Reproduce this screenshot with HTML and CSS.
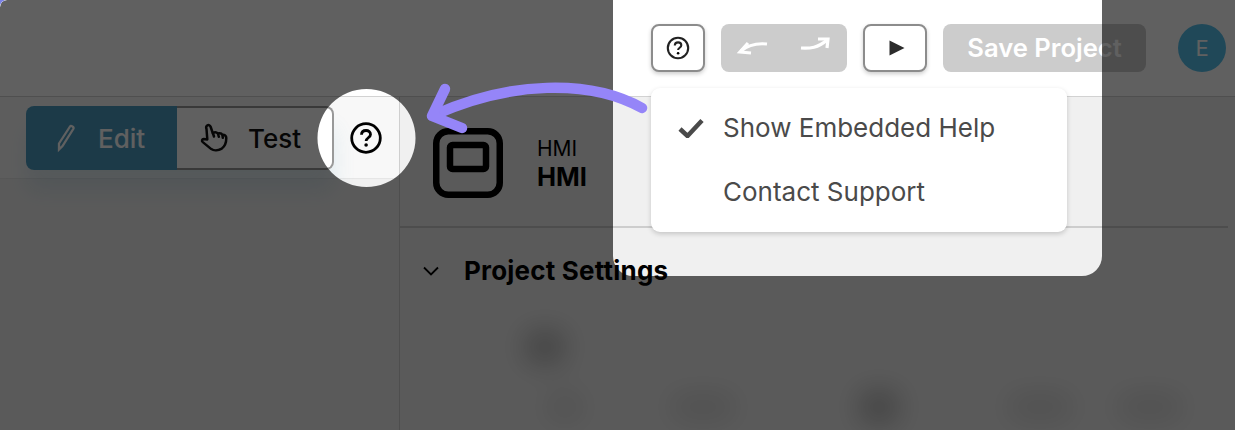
FILE: index.html
```html
<!DOCTYPE html>
<html lang="en">
<head>
<meta charset="utf-8">
<title>HMI Project</title>
<link rel="stylesheet" href="styles.css">
</head>
<body>
<div class="app">
  <header class="topbar">
    <button class="tool tool-help" type="button" aria-label="Help">
      <svg class="icon-help-sm" viewBox="0 0 24 24" width="24" height="24"><circle cx="12" cy="12" r="10.2"/><path d="M8.8 9.6c0-2 1.5-3.2 3.3-3.2s3.2 1.2 3.2 2.9c0 2.4-3.2 2.500-3.2 4.700"/><circle class="dot" cx="12.1" cy="17.2" r="1.3"/></svg>
    </button>
    <div class="history">
      <svg viewBox="0 0 34 20" width="34" height="20"><path d="M32 7C22 6 13 8 6 14"/><path d="M13 6 5 15 16 16"/></svg>
      <svg viewBox="0 0 34 20" width="34" height="20"><path d="M3 11C12 11.500 20 11 29 3"/><path d="M20 2 30 2 29 11"/></svg>
    </div>
    <button class="tool tool-play" type="button" aria-label="Run">
      <svg viewBox="0 0 16 16" width="16" height="16"><path d="M0.500 0.500 15.500 8 0.500 15.500Z"/></svg>
    </button>
    <button class="save" type="button">Save Project</button>
    <div class="avatar">E</div>
  </header>

  <div class="main">
    <aside class="sidebar">
      <div class="sidebar-tools">
        <div class="segment">
          <button class="seg seg-edit" type="button">
            <svg viewBox="0 0 20 30" width="20" height="30"><path d="M3 20.500 14 3.500c1-1.500 4.300.5 3.400 2.300L6.500 23 3 26.500Z"/></svg>
            <span>Edit</span>
          </button>
          <button class="seg seg-test" type="button">
            <svg viewBox="0 0 30 30" width="30" height="30"><path d="M8.200 2.500c1.500-1 3 0 3.500 1.500l2 6c2-1 4-.8 5.200.5 2-.6 3.800 0 4.600 1.300 2-.2 3.800 1 3.800 3.300 0 4-1 8-4.500 10.500-3.500 2-8 2.300-10.500.5l-8.500-7c-1.500-1.300-.8-3 1-3.200l3.500.5L7.500 6c-.6-1.500-.3-2.800.7-3.500Z"/><path d="M14 10.500l1 3M19 10.800l.8 3M23.500 12.300l.3 2.500"/></svg>
            <span>Test</span>
          </button>
        </div>
        <button class="help-spot" type="button" aria-label="Help">
          <svg class="icon-help-lg" viewBox="0 0 32 32" width="32" height="32"><circle cx="16" cy="16" r="14.300"/><path d="M11.500 12.800c0-2.800 2-4.300 4.600-4.300 2.500 0 4.400 1.600 4.400 3.900 0 3.300-4.400 3.400-4.400 6.600" /><circle class="dot" cx="16.100" cy="23" r="1.800"/></svg>
        </button>
      </div>
    </aside>

    <section class="content">
      <div class="block-head">
        <svg class="block-icon" viewBox="0 0 70 70" width="70" height="70"><rect x="3.250" y="3.250" width="63.500" height="63.500" rx="12"/><rect x="17" y="17" width="36" height="24" rx="2.500"/></svg>
        <div class="block-names">
          <div class="block-type">HMI</div>
          <div class="block-name">HMI</div>
        </div>
      </div>
      <div class="section-title">
        <svg viewBox="0 0 16 10" width="16" height="10"><path d="M1 1.500 8 8.500 15 1.500"/></svg>
        <h2>Project Settings</h2>
      </div>
      <div class="blurred">
        <div class="blur-row blur-row-a"><i class="blob blob-strong"></i></div>
        <div class="blur-row blur-row-b">
          <i class="blob blob-small"></i>
          <i class="blob blob-wide blob-b2"></i>
          <i class="blob blob-strong blob-b3"></i>
          <i class="blob blob-wide blob-b4"></i>
          <i class="blob blob-wide blob-b5"></i>
        </div>
      </div>
    </section>
  </div>

  <div class="menu">
    <div class="menu-item">
      <svg viewBox="0 0 26 20" width="26" height="20"><path d="M2 11 9.500 18 24 2.500"/></svg>
      <span>Show Embedded Help</span>
    </div>
    <div class="menu-item"><span>Contact Support</span></div>
  </div>

  <svg class="dim" viewBox="0 0 1235 430" width="1235" height="430" aria-hidden="true">
    <path fill-rule="evenodd" d="M0 0H1235V430H0Z M613 0V256A20 20 0 0 0 633 276H1082A20 20 0 0 0 1102 256V0Z M366.500 89A49 49 0 1 0 366.500 187A49 49 0 1 0 366.500 89Z"/>
  </svg>

  <svg class="pointer" viewBox="0 0 1235 430" width="1235" height="430" aria-hidden="true">
    <path d="M642 108C590 79 510 81 434 115"/>
    <path d="M445 89 432 116 462 128"/>
  </svg>
</div>
</body>
</html>
```
FILE: styles.css
```css
* { box-sizing: border-box; }
html { background: #7b82e6; }
body {
  margin: 0;
  width: 1235px;
  height: 430px;
  overflow: hidden;
  font-family: Inter, "Liberation Sans", sans-serif;
  color: #000;
}
button { font: inherit; padding: 0; cursor: pointer; }

.app {
  position: relative;
  width: 1235px;
  height: 430px;
  display: flex;
  flex-direction: column;
  background: #f0f0f0;
  overflow: hidden;
  border-top-left-radius: 7px;
}

.topbar {
  flex: none;
  height: 97px;
  background: #fff;
  border-bottom: 1px solid #d2d2d2;
  display: flex;
  align-items: center;
  justify-content: flex-end;
  gap: 16px;
  padding: 0 9px 1px 0;
}
.tool {
  height: 48px;
  background: #fff;
  border: 2px solid #8c8c8c;
  border-radius: 8px;
  box-shadow: 0 2px 4px rgba(0, 0, 0, .2);
  display: flex;
  align-items: center;
  justify-content: center;
}
.tool-help { width: 54px; }
.tool-play { width: 64px; padding-left: 3px; }
.tool-play path { fill: #2b2b2b; }
.icon-help-sm circle, .icon-help-sm path {
  fill: none;
  stroke: #222;
  stroke-width: 2.100;
}
.icon-help-sm .dot, .icon-help-lg .dot { fill: #000; stroke: none; }

.history {
  width: 126px;
  height: 48px;
  background: #ccc;
  border-radius: 8px;
  display: flex;
  align-items: center;
  justify-content: space-between;
  padding: 0 15px 2px 14px;
}
.history path {
  fill: none;
  stroke: #fff;
  stroke-width: 3.200;
}
.save {
  width: 203px;
  height: 48px;
  background: #ccc;
  border: 0;
  border-radius: 8px;
  color: #fff;
  font-size: 25.600px;
  font-weight: 600;
}
.avatar {
  width: 48px;
  height: 48px;
  margin-left: 16px;
  border-radius: 50%;
  background: #55bfea;
  color: #fff;
  font-size: 22px;
  display: flex;
  align-items: center;
  justify-content: center;
}

.main { flex: 1; display: flex; min-height: 0; }
.sidebar {
  flex: none;
  width: 400px;
  border-right: 1px solid #cfcfcf;
}
.sidebar-tools {
  height: 82px;
  background: #f8f8f8;
  border-bottom: 1px solid #e6e6e6;
  display: flex;
  align-items: center;
  padding: 1px 0 0 26px;
}
.segment {
  display: flex;
  height: 64px;
  border-radius: 8px;
  box-shadow: 0 22px 22px rgba(75, 155, 192, .14);
}
.seg {
  height: 64px;
  display: flex;
  align-items: center;
  font-size: 26px;
  font-weight: 500;
}
.seg-edit {
  width: 151px;
  background: #4b9bc0;
  border: 0;
  border-radius: 8px 0 0 8px;
  color: #fff;
  padding-left: 30px;
  gap: 22px;
}
.seg-edit path {
  fill: none;
  stroke: #fff;
  stroke-width: 2.300;
}
.seg-test {
  width: 157px;
  background: #fff;
  border: 2px solid #999;
  border-left: 0;
  border-radius: 0 8px 8px 0;
  color: #111;
  padding-left: 22px;
  gap: 19px;
}
.seg-test path {
  fill: none;
  stroke: #111;
  stroke-width: 2.500;
  stroke-linejoin: round;
  stroke-linecap: round;
}
.help-spot {
  width: 32px;
  height: 32px;
  margin-left: 16px;
  border: 0;
  background: transparent;
  display: flex;
}
.icon-help-lg circle, .icon-help-lg path {
  fill: none;
  stroke: #000;
  stroke-width: 2.800;
}

.content { flex: 1; min-width: 0; padding-right: 7px; }
.block-head {
  height: 131px;
  border-bottom: 2px solid #cdcdcd;
  display: flex;
  align-items: center;
  gap: 34px;
  padding: 3px 0 1px 33px;
}
.block-icon rect {
  fill: none;
  stroke: #000;
  stroke-width: 6.500;
}
.block-names { display: flex; flex-direction: column; gap: 0; padding-top: 2px; }
.block-type { font-size: 21px; line-height: 26px; }
.block-name { font-size: 25.500px; line-height: 30px; font-weight: 700; }

.section-title {
  display: flex;
  align-items: center;
  gap: 25px;
  height: 40px;
  margin-top: 23px;
  padding-left: 23px;
}
.section-title path {
  fill: none;
  stroke: #000;
  stroke-width: 1.800;
}
.section-title h2 {
  margin: 0;
  font-size: 26px;
  font-weight: 700;
  letter-spacing: .2px;
  line-height: 40px;
}

.blurred {
  filter: blur(15px);
  opacity: .4;
  padding-top: 30px;
}
.blur-row { display: flex; align-items: center; }
.blur-row-a { height: 52px; padding-left: 128px; }
.blur-row-b { height: 40px; margin-top: 14px; padding-left: 150px; }
.blob { display: block; flex: none; height: 22px; background: #000; opacity: .35; }
.blob-strong { width: 34px; height: 28px; opacity: .8; }
.blob-small { width: 30px; }
.blob-wide { width: 60px; }
.blob-b2 { margin-left: 93px; }
.blob-b3 { margin-left: 129px; }
.blob-b4 { margin-left: 114px; }
.blob-b5 { margin-left: 50px; }

.menu {
  position: absolute;
  left: 651px;
  top: 88px;
  width: 416px;
  height: 144px;
  padding: 7px 0 9px;
  background: #fff;
  border-radius: 9px;
  box-shadow: 0 2px 5px rgba(0, 0, 0, .18);
  color: #4a4a4a;
  font-size: 26px;
}
.menu-item {
  position: relative;
  height: 64px;
  display: flex;
  align-items: center;
  padding-left: 72px;
}
.menu-item svg {
  position: absolute;
  left: 27px;
  top: 23px;
}
.menu-item path {
  fill: none;
  stroke: #4a4a4a;
  stroke-width: 4.500;
}

.dim {
  position: absolute;
  left: 0;
  top: 0;
  border-top-left-radius: 7px;
}
.dim path { fill: rgba(0, 0, 0, .625); }
.pointer { position: absolute; left: 0; top: 0; }
.pointer path {
  fill: none;
  stroke: #9585f8;
  stroke-width: 10.500;
  stroke-linecap: round;
  stroke-linejoin: round;
}
```
